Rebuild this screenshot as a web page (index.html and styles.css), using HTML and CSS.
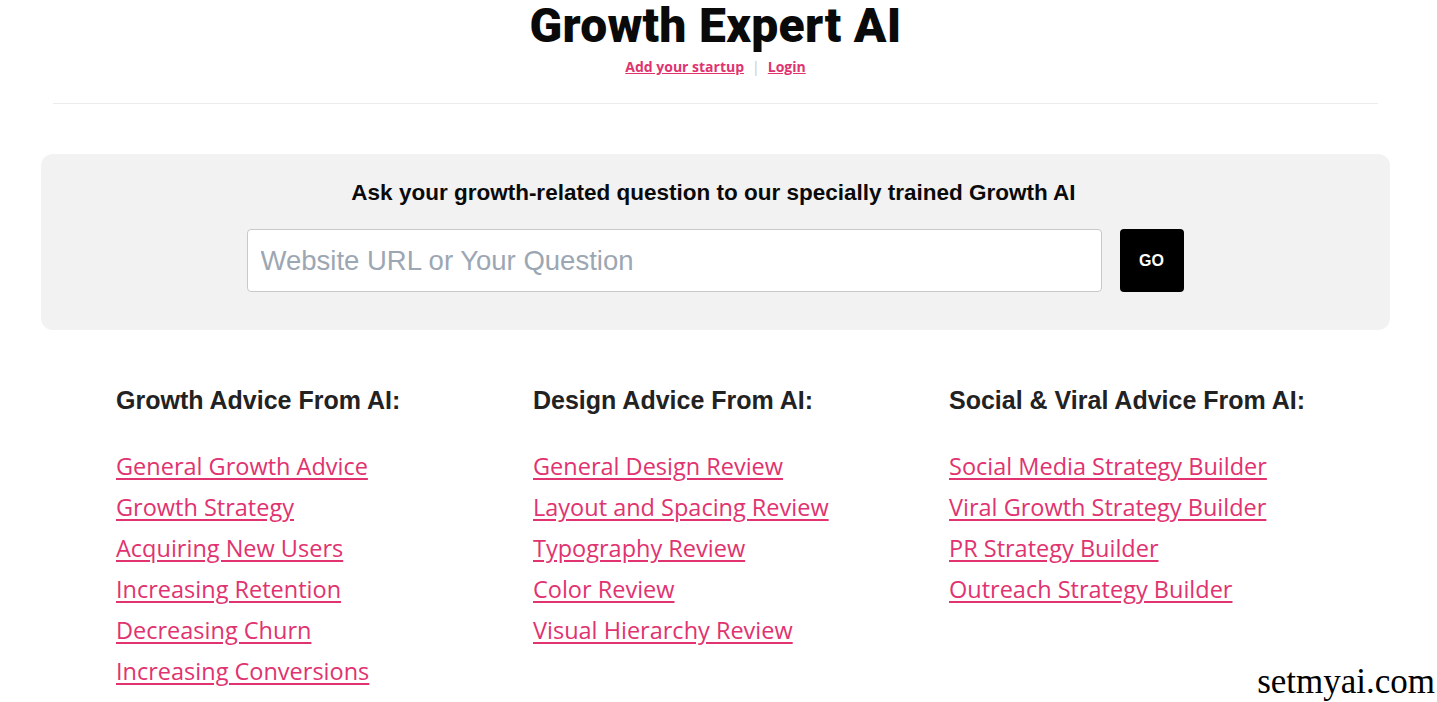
FILE: index.html
```html
<!DOCTYPE html>
<html lang="en">
<head>
<meta charset="utf-8">
<title>Growth Expert AI</title>
<link rel="stylesheet" href="styles.css">
</head>
<body>
<header class="header">
  <h1 class="logo">Growth Expert AI</h1>
  <nav class="nav">
    <a href="#" class="nav-link">Add your startup</a>
    <span class="sep">|</span>
    <a href="#" class="nav-link">Login</a>
  </nav>
</header>
<div class="rule"></div>
<section class="ask">
  <h2 class="ask-title">Ask your growth-related question to our specially trained Growth AI</h2>
  <form class="ask-form">
    <input class="ask-input" type="text" placeholder="Website URL or Your Question">
    <button class="go" type="button">GO</button>
  </form>
</section>
<section class="cols">
  <div class="col">
    <h3 class="col-title">Growth Advice From AI:</h3>
    <ul class="list">
      <li><a href="#">General Growth Advice</a></li>
      <li><a href="#">Growth Strategy</a></li>
      <li><a href="#">Acquiring New Users</a></li>
      <li><a href="#">Increasing Retention</a></li>
      <li><a href="#">Decreasing Churn</a></li>
      <li><a href="#">Increasing Conversions</a></li>
    </ul>
  </div>
  <div class="col">
    <h3 class="col-title">Design Advice From AI:</h3>
    <ul class="list">
      <li><a href="#">General Design Review</a></li>
      <li><a href="#">Layout and Spacing Review</a></li>
      <li><a href="#">Typography Review</a></li>
      <li><a href="#">Color Review</a></li>
      <li><a href="#">Visual Hierarchy Review</a></li>
    </ul>
  </div>
  <div class="col">
    <h3 class="col-title">Social &amp; Viral Advice From AI:</h3>
    <ul class="list">
      <li><a href="#">Social Media Strategy Builder</a></li>
      <li><a href="#">Viral Growth Strategy Builder</a></li>
      <li><a href="#">PR Strategy Builder</a></li>
      <li><a href="#">Outreach Strategy Builder</a></li>
    </ul>
  </div>
</section>
<div class="watermark">setmyai.com</div>
</body>
</html>
```
FILE: styles.css
```css
* { box-sizing: border-box; }
html, body { margin: 0; padding: 0; }
body {
  background: #fff;
  font-family: "Liberation Sans", Arial, sans-serif;
  color: #222;
  overflow: hidden;
  height: 702px;
  position: relative;
}
.header {
  display: flex;
  flex-direction: column;
  align-items: center;
}
.logo {
  margin: 0;
  padding-top: 1px;
  padding-right: 6px;
  font-family: Roboto, sans-serif;
  font-weight: 900;
  font-size: 48px;
  line-height: 50px;
  letter-spacing: 0.3px;
  color: #0a0a0a;
}
.nav {
  margin-top: 6px;
  display: flex;
  align-items: center;
  gap: 8px;
  font-family: "Open Sans", sans-serif;
  font-size: 14px;
  font-weight: 700;
  line-height: 20px;
  padding-right: 6px;
}
.nav-link { color: #e0336f; text-decoration: underline; }
.sep { color: #c8c8c8; font-weight: 400; }
.rule {
  margin: 26px 59px 0 53px;
  height: 1px;
  background: #ececec;
}
.ask {
  margin: 50px 47px 0 41px;
  background: #f2f2f2;
  border-radius: 12px;
  padding: 26px 0 38px;
  display: flex;
  flex-direction: column;
  align-items: center;
}
.ask-title {
  margin: 0;
  font-size: 22.5px;
  font-weight: 700;
  line-height: 26px;
  color: #0a0a0a;
  padding-right: 4px;
}
.ask-form {
  margin-top: 23px;
  display: flex;
  gap: 18px;
  padding-right: 1px;
}
.ask-input {
  width: 855px;
  height: 63px;
  border: 1px solid #c9c9c9;
  border-radius: 4px;
  background: #fff;
  padding: 0 13px;
  font-family: "Liberation Sans", Arial, sans-serif;
  font-size: 27.5px;
  color: #333;
  outline: none;
}
.ask-input::placeholder { color: #9ca7b3; }
.go {
  width: 64px;
  height: 63px;
  border: 0;
  border-radius: 4px;
  background: #000;
  color: #fff;
  font-family: "Liberation Sans", Arial, sans-serif;
  font-size: 16px;
  font-weight: 700;
  cursor: pointer;
}
.cols {
  display: grid;
  grid-template-columns: 417px 416px 417px;
  padding-left: 116px;
  margin-top: 55px;
}
.col-title {
  margin: 0;
  font-size: 25px;
  font-weight: 700;
  line-height: 30px;
  color: #222;
}
.list {
  list-style: none;
  margin: 31px 0 0;
  padding: 0;
  font-family: "Open Sans", sans-serif;
  font-size: 23.5px;
  line-height: 41px;
}
.list a {
  color: #e0336f;
  text-decoration: underline;
  text-underline-offset: 3px;
}
.watermark {
  position: absolute;
  right: 2px;
  bottom: 0;
  font-family: "Liberation Serif", "Times New Roman", serif;
  font-size: 35px;
  color: #000;
  line-height: 40px;
}
```
